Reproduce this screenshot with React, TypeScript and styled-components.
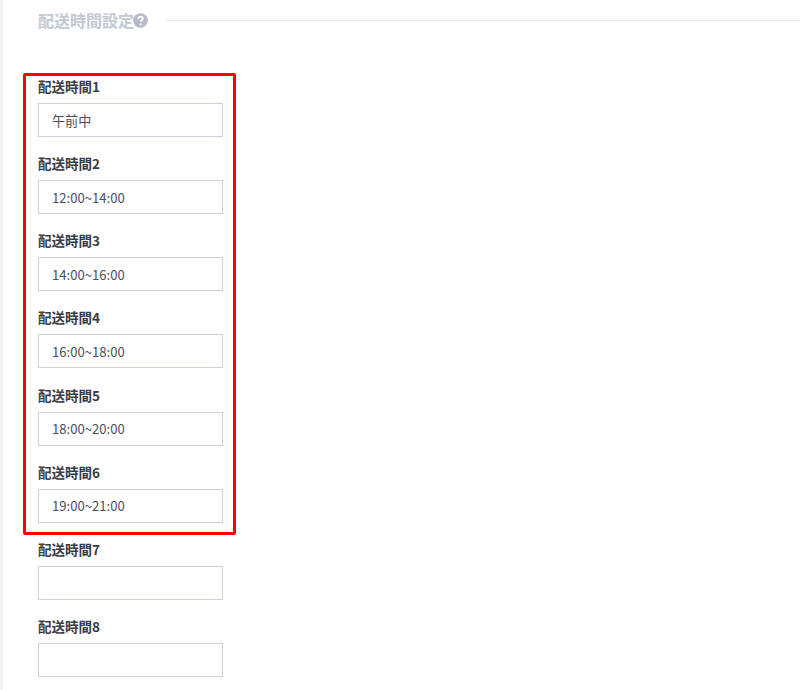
import React from 'react';
import styled, { createGlobalStyle } from 'styled-components';

const slots = ['午前中', '12:00~14:00', '14:00~16:00', '16:00~18:00', '18:00~20:00', '19:00~21:00', '', ''];

const App: React.FC = () => (
    <>
        <GlobalStyle />
        <Page>
            <Content>
                <SectionHeader>
                    <SectionTitle>配送時間設定</SectionTitle>
                    <HelpIcon viewBox="0 0 16 16">
                        <circle cx="8" cy="8" r="7.8" fill="#b4bac8" />
                        <path d="M5.6 6.2c.1-1.4 1.1-2.2 2.5-2.2 1.4 0 2.4.8 2.4 2 0 .9-.5 1.4-1.2 1.8-.7.4-.9.7-.9 1.3v.2" fill="none" stroke="#fff" strokeWidth="1.9" />
                        <circle cx="8.3" cy="12" r="1.2" fill="#fff" />
                    </HelpIcon>
                    <SectionLine />
                </SectionHeader>
                <FieldList>
                    {slots.map((value, index) => (
                        <Field key={index}>
                            <FieldLabel>配送時間{index + 1}</FieldLabel>
                            <FieldInput readOnly value={value} />
                        </Field>
                    ))}
                    <Highlight />
                </FieldList>
            </Content>
        </Page>
    </>
);

export default App;

const GlobalStyle = createGlobalStyle`
    html, body {
        margin: 0;
        padding: 0;
        height: 100%;
        overflow: hidden;
        background: #fff;
    }
    * {
        box-sizing: border-box;
    }
`;

const Page = styled.div`
    width: 800px;
    height: 690px;
    overflow: hidden;
    border-left: 3px solid #eff2f7;
    font-family: 'Noto Sans CJK JP', 'Noto Sans', sans-serif;
`;

const Content = styled.div`
    padding: 10px 0 0 35px;
`;

const SectionHeader = styled.div`
    display: flex;
    align-items: center;
    height: 20px;
`;

const SectionTitle = styled.h2`
    margin: 0;
    font-size: 16px;
    line-height: 20px;
    font-weight: 700;
    color: #c3c8d3;
`;

const HelpIcon = styled.svg`
    width: 15px;
    height: 15px;
    margin-left: -1px;
`;

const SectionLine = styled.div`
    flex: 1;
    height: 1px;
    margin-left: 18px;
    background: #e4e6f0;
`;

const FieldList = styled.div`
    position: relative;
    display: flex;
    flex-direction: column;
    gap: 16.15px;
    margin-top: 46px;
`;

const Field = styled.div`
    display: flex;
    flex-direction: column;
    gap: 7px;
`;

const FieldLabel = styled.label`
    font-size: 13.5px;
    line-height: 20px;
    font-weight: 700;
    color: #3a3d45;
`;

const FieldInput = styled.input`
    width: 185px;
    height: 34px;
    padding: 0 13px;
    border: 1px solid #cdd0e0;
    border-radius: 0;
    outline: none;
    background: #fff;
    font-family: inherit;
    font-size: 13.1px;
    color: #4a4e5a;
`;

const Highlight = styled.div`
    position: absolute;
    left: -15px;
    top: -3px;
    width: 213px;
    height: 462px;
    border: 3px solid #ff0000;
    border-radius: 2px;
    pointer-events: none;
`;
